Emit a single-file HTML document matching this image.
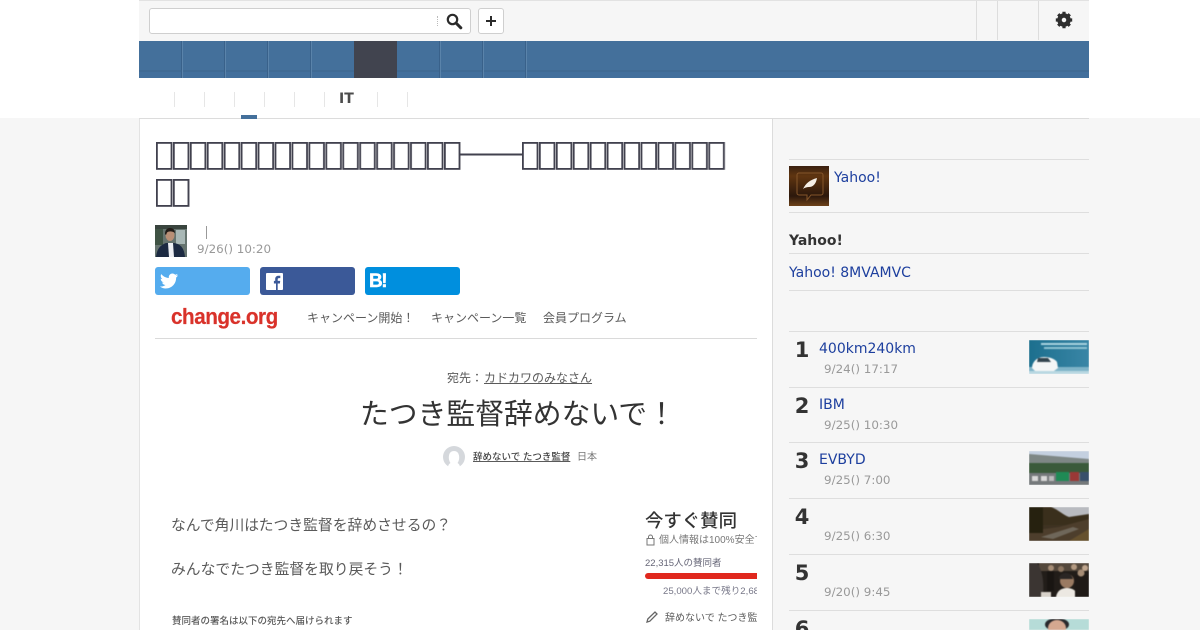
<!DOCTYPE html>
<html lang="ja"><head><meta charset="utf-8"><title>change.org</title>
<style>
html,body{margin:0;padding:0;width:1200px;height:630px;overflow:hidden;background:#fff}
body{position:relative;font-family:"DejaVu Sans",sans-serif;color:#333}
.a{position:absolute;white-space:nowrap}
.l{position:absolute;background:#dedede;height:1px}
.v{position:absolute;width:1px;background:#ddd}
.nv{position:absolute;width:1px;top:41px;height:37px;background:#39618a;box-shadow:1px 0 0 #5a83aa}
.sv{position:absolute;width:1px;top:92px;height:15px;background:#e6e6e6}
.lnk{color:#1d3f9e;font-size:14px;line-height:18px}
.dt{color:#999;font-size:11.9px;line-height:16px}
.n{font-weight:700;font-size:21px;line-height:24px;color:#333;width:26px;text-align:center}
.j{font-family:"Liberation Sans","Noto Sans CJK JP",sans-serif}
.t{position:absolute;width:60px;height:34px;left:1029px;overflow:hidden}
.t svg{display:block;filter:blur(.4px)}
.btn{position:absolute;top:267px;width:95px;height:28px;border-radius:3px}
.s{position:absolute;left:155px;top:303px;width:602px;height:327px;overflow:hidden;background:#fff}
.s .a{color:#5a5a5a}
</style></head><body>
<div class="a" style="left:0;top:118px;width:1200px;height:512px;background:#f6f6f6"></div>

<!-- top bar -->
<div class="a" style="left:139px;top:0;width:950px;height:41px;background:#f6f6f6;border-top:1px solid #e2e2e2;box-sizing:border-box"></div>
<div class="a" style="left:149px;top:8px;width:322px;height:26px;background:#fff;border:1px solid #cfcfcf;border-radius:3px;box-sizing:border-box"></div>
<div class="a" style="left:437px;top:16px;width:1px;height:10px;border-left:1px dotted #bbb"></div>
<svg class="a" style="left:446px;top:13px" width="17" height="17" viewBox="0 0 17 17"><circle cx="6.5" cy="6.500" r="4.700" fill="none" stroke="#2b2b2b" stroke-width="2.200"/><path d="M10.500 10.500l4.300 4.300" stroke="#2b2b2b" stroke-width="3" stroke-linecap="round"/></svg>
<div class="a" style="left:478px;top:8px;width:26px;height:26px;background:#fff;border:1px solid #cfcfcf;border-radius:3px;box-sizing:border-box"></div>
<svg class="a" style="left:485px;top:15px" width="12" height="12" viewBox="0 0 12 12"><path d="M6 1v10M1 6h10" stroke="#2b2b2b" stroke-width="2"/></svg>
<div class="v" style="left:976px;top:1px;height:39px"></div>
<div class="v" style="left:997px;top:1px;height:39px"></div>
<div class="v" style="left:1038px;top:1px;height:39px"></div>
<svg class="a" style="left:1055px;top:11px" width="18" height="18" viewBox="0 0 18 18"><circle cx="9" cy="9" r="4.500" fill="none" stroke="#2f2f2f" stroke-width="4.500"/><path d="M9 .8v3M9 14.200v3M.8 9h3M14.200 9h3M3.200 3.200l2.100 2.100M12.700 12.700l2.100 2.100M3.200 14.800l2.100-2.100M12.700 5.300l2.100-2.100" stroke="#2f2f2f" stroke-width="3.200"/></svg>

<!-- nav -->
<div class="a" style="left:139px;top:41px;width:950px;height:37px;background:linear-gradient(#44709b 0,#44709b 29px,#3f6a94 29px,#3f6a94 31px,#426f9c 31px)"></div>
<div class="a" style="left:354px;top:41px;width:43px;height:37px;background:#41444f"></div>
<div class="nv" style="left:181px"></div>
<div class="nv" style="left:224px"></div>
<div class="nv" style="left:267px"></div>
<div class="nv" style="left:310px"></div>
<div class="nv" style="left:439px"></div>
<div class="nv" style="left:482px"></div>
<div class="nv" style="left:525px"></div>

<!-- sub nav -->
<div class="sv" style="left:174px"></div>
<div class="sv" style="left:204px"></div>
<div class="sv" style="left:234px"></div>
<div class="sv" style="left:264px"></div>
<div class="sv" style="left:294px"></div>
<div class="sv" style="left:324px"></div>
<div class="sv" style="left:377px"></div>
<div class="sv" style="left:407px"></div>
<div class="a" style="left:339px;top:91px;font-size:14px;line-height:17px;font-weight:700;color:#4c4c4c">IT</div>
<div class="l" style="left:139px;top:118px;width:950px;background:#dcdcdc"></div>
<div class="a" style="left:241px;top:115px;width:16px;height:4px;background:#44709b"></div>

<!-- main -->
<div class="a" style="left:139px;top:119px;width:634px;height:511px;background:#fff;border-left:1px solid #e3e3e3;border-right:1px solid #dcdcdc;box-sizing:border-box"></div>

<svg class="a" style="left:150px;top:135px" width="590" height="80" viewBox="0 0 590 80">
<defs>
<pattern id="p1" patternUnits="userSpaceOnUse" x="6" y="7" width="16.94" height="30"><rect x=".9" y=".9" width="14.6" height="26" fill="none" stroke="#41414e" stroke-width="1.800"/></pattern>
<pattern id="p2" patternUnits="userSpaceOnUse" x="372" y="7" width="16.94" height="30"><rect x=".9" y=".9" width="14.6" height="26" fill="none" stroke="#41414e" stroke-width="1.800"/></pattern>
<pattern id="p3" patternUnits="userSpaceOnUse" x="6" y="44" width="16.94" height="30"><rect x=".9" y=".9" width="14.6" height="26" fill="none" stroke="#41414e" stroke-width="1.800"/></pattern>
</defs>
<rect x="6" y="7" width="304.900" height="28" fill="url(#p1)"/>
<rect x="310" y="18.500" width="62" height="2" fill="#41414e"/>
<rect x="372" y="7" width="203.300" height="28" fill="url(#p2)"/>
<rect x="6" y="44" width="33.900" height="28" fill="url(#p3)"/>
</svg>

<svg class="a" style="left:155px;top:225px;filter:blur(.3px)" width="32" height="32" viewBox="0 0 32 32"><rect width="32" height="32" fill="#66746f"/><rect x="0" y="0" width="32" height="4" fill="#39443e"/><rect x="21" y="5" width="9" height="14" fill="#a9b8b6"/><rect x="0" y="4" width="8" height="16" fill="#3f5344"/><path d="M1 32c1-9 5-12 10-14l8 0c6 1 10 4 11 14z" fill="#1c2a42"/><path d="M13 18h5l1 14h-5z" fill="#eef0f4"/><ellipse cx="15" cy="10" rx="4.500" ry="6" fill="#b98f76"/><path d="M10 9c0-5 3-6 5-6 4 0 5 3 5 5-3-2-6-2-8-.5l-1 2.500z" fill="#221c18"/></svg>
<div class="v" style="left:206px;top:226px;height:13px;background:#999"></div>
<div class="a dt" style="left:197px;top:241px">9/26() 10:20</div>

<div class="btn" style="left:155px;background:#55acee"></div>
<svg class="a" style="left:160px;top:273px" width="18" height="16" viewBox="0 0 24 20"><path d="M24 2.400c-.9.4-1.800.7-2.800.8 1-.6 1.800-1.600 2.200-2.700-1 .6-2 1-3.100 1.200C19.300.7 18 0 16.600 0c-2.700 0-4.900 2.200-4.900 4.900 0 .4 0 .8.100 1.100C7.700 5.800 4.100 3.900 1.700.9 1.200 1.600 1 2.500 1 3.400c0 1.700.9 3.200 2.200 4.100-.8 0-1.600-.2-2.200-.6v.1c0 2.400 1.700 4.400 3.900 4.800-.4.100-.8.200-1.300.2-.3 0-.6 0-.9-.1.600 2 2.400 3.400 4.600 3.400-1.700 1.300-3.800 2.100-6.100 2.100-.4 0-.8 0-1.200-.1C2.200 19.200 4.800 20 7.500 20c9.100 0 14-7.500 14-14v-.6c1-.7 1.800-1.600 2.500-3z" fill="#fff"/></svg>
<div class="btn" style="left:260px;background:#3b5998"></div>
<svg class="a" style="left:266px;top:273px" width="17" height="17" viewBox="0 0 17 17"><rect width="17" height="17" rx="1" fill="#fff"/><path d="M11.700 17v-6.500h2.200l.3-2.600h-2.500V6.300c0-.7.200-1.200 1.300-1.200h1.300V2.800c-.2 0-1-.1-1.900-.1-1.900 0-3.200 1.200-3.200 3.300v1.900H7.900v2.600h2.100V17z" fill="#3b5998"/></svg>
<div class="btn" style="left:365px;background:#008fde"></div>
<div class="a" style="left:369px;top:272px;font:700 19px/20px 'Liberation Sans',sans-serif;color:#fff;letter-spacing:-1.500px;-webkit-text-stroke:.4px #fff">B!</div>

<!-- screenshot image -->
<div class="s j">
  <div class="a" style="left:16px;top:0;font:700 22px/27px 'Liberation Sans',sans-serif;color:#d9322a;letter-spacing:-.5px;transform:scaleX(.94);transform-origin:0 0;-webkit-text-stroke:.2px #d9322a">change.org</div>
  <div class="a" style="left:152px;top:6px;font-size:12px;line-height:18px">キャンペーン開始！</div>
  <div class="a" style="left:276px;top:6px;font-size:12px;line-height:18px">キャンペーン一覧</div>
  <div class="a" style="left:388px;top:6px;font-size:12px;line-height:18px">会員プログラム</div>
  <div class="l" style="left:0;top:35px;width:602px;background:#dadada"></div>
  <div class="a" style="left:292px;top:67px;font-size:12px;line-height:16px">宛先：<span style="text-decoration:underline;margin-left:1px">カドカワのみなさん</span></div>
  <div class="a" style="left:205px;top:94px;font-size:28.800px;line-height:36px"><span style="color:#333">たつき監督辞めないで！</span></div>
  <svg class="a" style="left:288px;top:143px" width="22" height="22" viewBox="0 0 22 22"><circle cx="11" cy="11" r="11" fill="#d5d8dc"/><path d="M5 22c0-3 1-4 2.500-5C6 15 5.500 12 6 9.500 6.500 6.500 8.500 5 11 5s4.500 1.500 5 4.500c.5 2.500 0 5.500-1.500 7.500 1.500 1 2.500 2 2.500 5z" fill="#fff"/></svg>
  <div class="a" style="left:318px;top:148px;font-size:9.500px;line-height:14px;text-decoration:underline;font-weight:500"><span style="color:#444">辞めないで たつき監督</span></div>
  <div class="a" style="left:422px;top:148px;font-size:10px;line-height:14px"><span style="color:#777">日本</span></div>
  <div class="a" style="left:16px;top:213px;font-size:14.800px;line-height:20px">なんで角川はたつき監督を辞めさせるの？</div>
  <div class="a" style="left:16px;top:257px;font-size:14.800px;line-height:20px">みんなでたつき監督を取り戻そう！</div>
  <div class="a" style="left:17px;top:312px;font-size:9.500px;line-height:14px;font-weight:500">賛同者の署名は以下の宛先へ届けられます</div>
  <div class="a" style="left:490px;top:206px;font-size:18.400px;line-height:24px;font-weight:500"><span style="color:#333">今すぐ賛同</span></div>
  <svg class="a" style="left:491px;top:231px" width="9" height="12" viewBox="0 0 9 12"><rect x="1" y="4.500" width="7" height="6.500" fill="none" stroke="#777"/><path d="M2.500 4.500V3a2 2 0 0 1 4 0v1.500" fill="none" stroke="#777"/></svg>
  <div class="a" style="left:504px;top:231px;font-size:10px;line-height:14px"><span style="color:#777">個人情報は100%安全で</span></div>
  <div class="a" style="left:490px;top:254px;font-size:9.500px;line-height:14px"><span style="color:#667">22,315人の賛同者</span></div>
  <div class="a" style="left:490px;top:270px;width:112px;height:6px;background:#e0281e;border-radius:3px 0 0 3px"></div>
  <div class="a" style="left:508px;top:282px;font-size:9.600px;line-height:14px"><span style="color:#778">25,000人まで残り2,68</span></div>
  <svg class="a" style="left:490px;top:307px" width="14" height="14" viewBox="0 0 14 14"><path d="M2 12l.8-3L10 2l2 2-7.200 7.200z" fill="none" stroke="#666" stroke-width="1.300"/></svg>
  <div class="a" style="left:510px;top:309px;font-size:10px;line-height:14px">辞めないで たつき監督</div>
</div>

<!-- sidebar -->
<div class="l" style="left:789px;top:159px;width:300px"></div>
<svg class="a" style="left:789px;top:166px" width="40" height="40" viewBox="0 0 40 40"><defs><linearGradient id="g" x1="0" y1="0" x2="0" y2="1"><stop offset="0" stop-color="#3a2010"/><stop offset=".25" stop-color="#5f3510"/><stop offset=".75" stop-color="#2c180c"/><stop offset="1" stop-color="#6d4119"/></linearGradient></defs><rect width="40" height="40" fill="url(#g)"/><path d="M10 7h22a2 2 0 0 1 2 2v18a2 2 0 0 1-2 2H22l-4 5v-5h-8a2 2 0 0 1-2-2V9a2 2 0 0 1 2-2z" fill="none" stroke="#85562a" stroke-width="1"/><path d="M14 23c3-6 7-9 14-11-1 6-4 9-8 9-2 0-4 .5-6 2z" fill="#f5efe6"/></svg>
<div class="a lnk" style="left:834px;top:169px">Yahoo!</div>
<div class="l" style="left:789px;top:212px;width:300px"></div>
<div class="a" style="left:789px;top:232px;font-size:14px;line-height:18px;font-weight:700;color:#333">Yahoo!</div>
<div class="l" style="left:789px;top:253px;width:300px"></div>
<div class="a lnk" style="left:789px;top:264px">Yahoo! 8MVAMVC</div>
<div class="l" style="left:789px;top:290px;width:300px"></div>

<div class="l" style="left:789px;top:331px;width:300px"></div>
<div class="a n" style="left:789px;top:338px">1</div>
<div class="a lnk" style="left:819px;top:340px">400km240km</div>
<div class="a dt" style="left:824px;top:361px">9/24() 17:17</div>
<div class="t" style="top:340px"><svg width="60" height="34" viewBox="0 0 60 34"><defs><linearGradient id="c" x1="0" y1="0" x2="1" y2="0"><stop offset="0" stop-color="#1c6f8e"/><stop offset="1" stop-color="#3a86a6"/></linearGradient></defs><rect width="60" height="34" fill="url(#c)"/><rect y="27" width="60" height="7" fill="#7fb4c8"/><rect y="31" x="0" width="60" height="3" fill="#b9d8e2"/><path d="M3 28c0-5 4-11 12-11 6 0 11 2 13 5l1 6-4 3H6z" fill="#f4f6f6"/><path d="M9 18h10l3 4H8z" fill="#33454f"/><rect x="12" y="3" width="46" height="2" fill="#a9d3df"/><rect x="15" y="7" width="43" height="2" fill="#8ec3d3"/></svg></div>
<div class="l" style="left:789px;top:387px;width:300px"></div>
<div class="a n" style="left:789px;top:394px">2</div>
<div class="a lnk" style="left:819px;top:396px">IBM</div>
<div class="a dt" style="left:824px;top:417px">9/25() 10:30</div>
<div class="l" style="left:789px;top:442px;width:300px"></div>
<div class="a n" style="left:789px;top:449px">3</div>
<div class="a lnk" style="left:819px;top:451px">EVBYD</div>
<div class="a dt" style="left:824px;top:472px">9/25() 7:00</div>
<div class="t" style="top:451px"><svg width="60" height="34" viewBox="0 0 60 34"><rect width="60" height="34" fill="#8d98a0"/><rect width="60" height="10" fill="#c4d0e0"/><path d="M0 3L60 8V12H0z" fill="#7e8785"/><rect y="12" width="60" height="10" fill="#3a5a3a"/><rect y="22" width="60" height="12" fill="#75797b"/><rect x="27" y="21" width="13" height="9" fill="#1f8a55"/><rect x="41" y="21" width="9" height="9" fill="#9a3836"/><rect x="51" y="21" width="9" height="9" fill="#39506b"/><rect x="3" y="25" width="6" height="5" fill="#d8d8d8"/><rect x="12" y="25" width="6" height="5" fill="#d8d8d8"/><rect x="20" y="25" width="5" height="5" fill="#bbb"/></svg></div>
<div class="l" style="left:789px;top:498px;width:300px"></div>
<div class="a n" style="left:789px;top:505px">4</div>
<div class="a dt" style="left:824px;top:528px">9/25() 6:30</div>
<div class="t" style="top:507px"><svg width="60" height="34" viewBox="0 0 60 34"><rect width="60" height="34" fill="#3e3222"/><rect x="20" width="40" height="12" fill="#b9bbc0"/><path d="M0 0h22c8 3 12 8 18 10l20-3v11H0z" fill="#3a2f1c"/><path d="M0 24L30 20L60 12V34H0z" fill="#4d3e2c"/><path d="M12 30L44 20L50 22L24 32z" fill="#6f675a"/><path d="M0 0h14v26H0z" fill="#26210f"/><path d="M40 34L60 22V34z" fill="#66512e"/></svg></div>
<div class="l" style="left:789px;top:554px;width:300px"></div>
<div class="a n" style="left:789px;top:561px">5</div>
<div class="a dt" style="left:824px;top:584px">9/20() 9:45</div>
<div class="t" style="top:563px"><svg width="60" height="34" viewBox="0 0 60 34"><rect width="60" height="34" fill="#221d19"/><rect x="10" width="50" height="8" fill="#54483c"/><circle cx="22" cy="5" r="3" fill="#a68d76"/><circle cx="32" cy="6" r="3" fill="#8c7560"/><circle cx="45" cy="4" r="3" fill="#b49a82"/><circle cx="56" cy="5" r="3" fill="#c0a68e"/><path d="M0 0h8c6 8 7 20 6 34H0z" fill="#3b3532"/><circle cx="38" cy="18" r="7" fill="#9a7a62"/><path d="M30 14c4-6 12-5 14 2l-14 0z" fill="#2b2624"/><path d="M27 34c1-6 5-9 11-9s10 3 11 9z" fill="#ece8e2"/><rect x="18" y="8" width="7" height="20" fill="#191512"/><rect x="46" y="12" width="14" height="22" fill="#1f1a17"/><circle cx="52" cy="10" r="3.500" fill="#a68d76"/><rect x="12" y="29" width="10" height="5" fill="#d8d2ca"/></svg></div>
<div class="l" style="left:789px;top:610px;width:300px"></div>
<div class="a n" style="left:789px;top:617px">6</div>
<div class="t" style="top:619px"><svg width="60" height="11" viewBox="0 0 60 11"><rect width="60" height="11" fill="#b6dcd8"/><rect x="16" width="24" height="11" rx="8" fill="#28292c"/><ellipse cx="28" cy="9" rx="9" ry="8" fill="#d4a890"/></svg></div>
</body></html>
